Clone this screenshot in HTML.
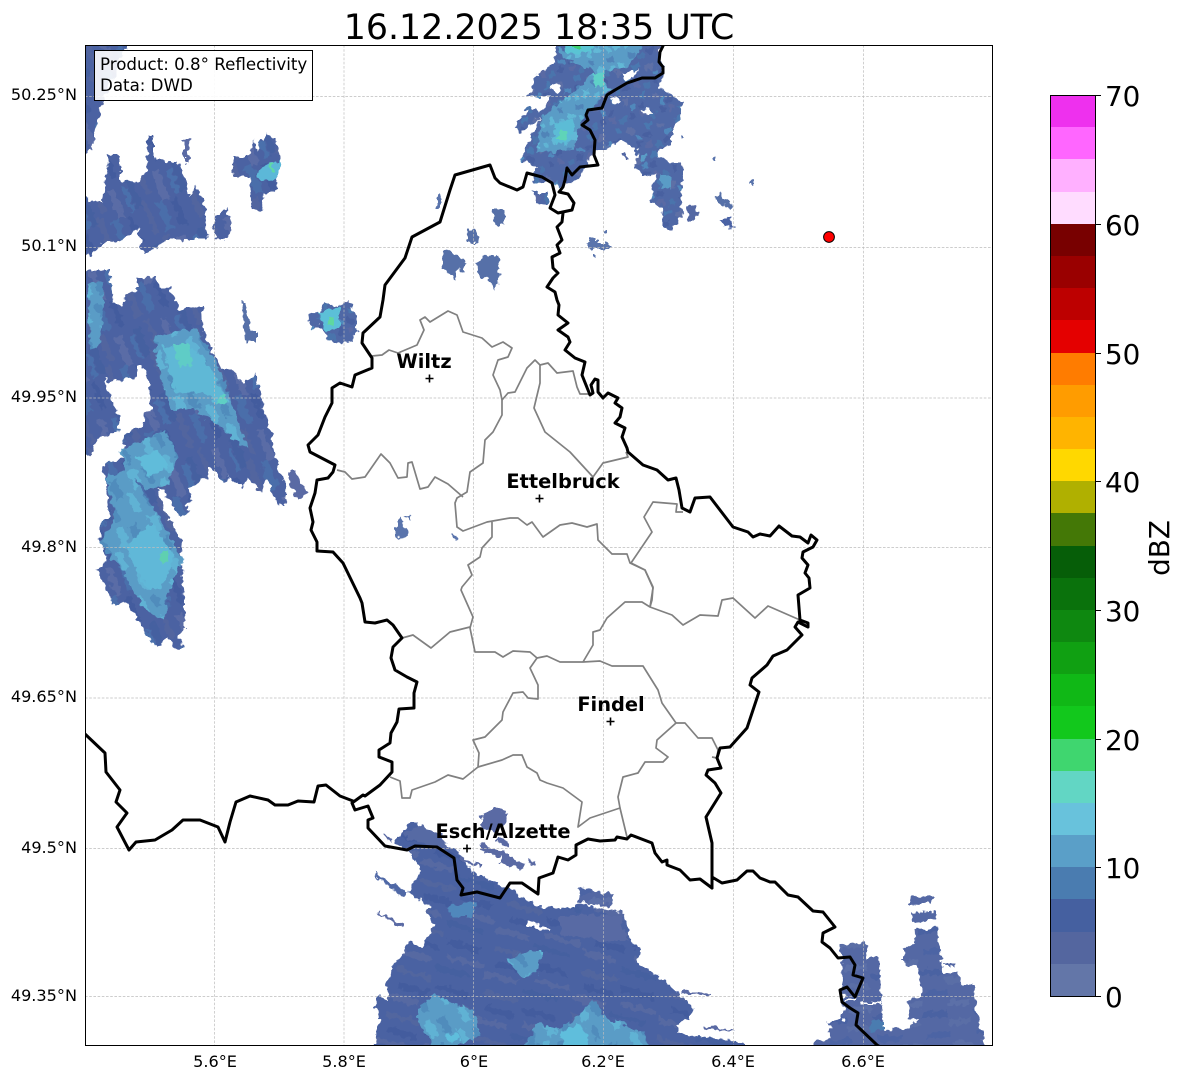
<!DOCTYPE html>
<html><head><meta charset="utf-8"><style>
html,body{margin:0;padding:0;background:#fff;width:1184px;height:1081px;overflow:hidden}
svg{display:block}
text{font-family:"DejaVu Sans",sans-serif;fill:#000}
</style></head><body>
<svg width="1184" height="1081" viewBox="0 0 1184 1081" xmlns="http://www.w3.org/2000/svg">
<defs>
<clipPath id="ax"><rect x="85" y="45" width="907" height="1000"/></clipPath>
<filter id="rough" filterUnits="userSpaceOnUse" x="50" y="20" width="980" height="1060" color-interpolation-filters="sRGB">
<feTurbulence type="fractalNoise" baseFrequency=".16" numOctaves="2" seed="7" result="n"/>
<feDisplacementMap in="SourceGraphic" in2="n" scale="9" xChannelSelector="R" yChannelSelector="G"/>
</filter>
<pattern id="pw" patternUnits="userSpaceOnUse" width="48" height="70" patternTransform="rotate(-22)">
<rect width="48" height="70" fill="#4b62a2"/>
<rect x="0" y="5" width="7" height="30" fill="#4560a0"/><rect x="7" y="30" width="6" height="36" fill="#52659f"/>
<rect x="14" y="0" width="5" height="26" fill="#52659f"/><rect x="20" y="36" width="8" height="30" fill="#4a6eaa"/>
<rect x="28" y="6" width="7" height="32" fill="#5a6ca6"/><rect x="36" y="40" width="6" height="28" fill="#435c9e"/>
<rect x="42" y="10" width="5" height="26" fill="#4a70ac"/></pattern>
<pattern id="pc" patternUnits="userSpaceOnUse" width="36" height="48" patternTransform="rotate(-25)">
<rect width="36" height="48" fill="#5a9cc6"/>
<rect x="2" y="4" width="8" height="18" fill="#508cbc"/><rect x="14" y="22" width="7" height="20" fill="#60b2d4"/>
<rect x="24" y="2" width="8" height="18" fill="#60b2d4"/><rect x="28" y="28" width="6" height="14" fill="#508cbc"/></pattern>
<pattern id="ps" patternUnits="userSpaceOnUse" width="90" height="46" patternTransform="rotate(15)">
<rect width="90" height="46" fill="#4a62a2"/>
<rect x="4" y="3" width="36" height="5" fill="#52669f"/><rect x="46" y="9" width="34" height="6" fill="#435c9e"/>
<rect x="10" y="17" width="30" height="6" fill="#435c9e"/><rect x="50" y="24" width="36" height="5" fill="#5669a2"/>
<rect x="0" y="30" width="34" height="6" fill="#5669a2"/><rect x="40" y="37" width="38" height="5" fill="#4560a0"/></pattern>
<pattern id="pe" patternUnits="userSpaceOnUse" width="50" height="42" patternTransform="rotate(-4)">
<rect width="50" height="42" fill="#5468a4"/>
<rect x="4" y="3" width="22" height="6" fill="#4c64a4"/><rect x="26" y="14" width="22" height="6" fill="#5c70a8"/>
<rect x="0" y="24" width="24" height="6" fill="#4a62a2"/><rect x="24" y="33" width="24" height="6" fill="#5a6ea6"/></pattern>
<pattern id="pn" patternUnits="userSpaceOnUse" width="30" height="30" patternTransform="rotate(-12)">
<rect width="30" height="30" fill="#4f68a6"/>
<rect x="2" y="2" width="6" height="6" fill="#5a6aa4"/><rect x="12" y="5" width="6" height="6" fill="#4a74ac"/>
<rect x="22" y="2" width="6" height="6" fill="#4860a0"/><rect x="5" y="14" width="6" height="6" fill="#4a78b0"/>
<rect x="17" y="17" width="6" height="6" fill="#5e70a6"/><rect x="2" y="24" width="6" height="5" fill="#4860a0"/>
<rect x="24" y="24" width="5" height="5" fill="#5088bc"/></pattern>
<pattern id="pnc" patternUnits="userSpaceOnUse" width="20" height="20" patternTransform="rotate(-12)">
<rect width="20" height="20" fill="#5a9cc6"/>
<rect x="2" y="2" width="6" height="6" fill="#5084b8"/><rect x="11" y="10" width="6" height="6" fill="#62b8d6"/>
<rect x="2" y="13" width="5" height="5" fill="#60b4d4"/></pattern>
</defs>

<rect width="1184" height="1081" fill="#fff"/>

<g clip-path="url(#ax)"><g filter="url(#rough)">
<!-- north-west column -->
<polygon fill="url(#pw)" points="75,35 128,35 122,58 110,85 103,100 97,125 92,150 75,153"/>
<!-- blob A -->
<polygon fill="url(#pw)" points="75,192 97,203 103,203 108,155 120,155 120,180 132,182 138,183 147,170 148,135 153,135 153,158 170,162 178,162 185,173 188,197 197,187 205,208 207,240 165,240 150,253 143,253 138,230 118,242 102,242 92,255 75,253"/>
<polygon fill="url(#pw)" points="213,221 226,209 231,221 231,232 226,240 216,240"/>
<polygon fill="#5a6aa4" points="184,140 190,140 188,162 184,162"/>
<!-- blob B -->
<polygon fill="url(#pw)" points="232,157 248,157 253,140 257,150 268,132 277,143 280,155 278,180 275,192 263,193 262,210 252,208 250,180 242,177 235,177 232,167"/>
<polygon fill="#5cb8d8" points="256,172 266,165 280,160 278,178 262,182"/>
<rect x="270" y="163" width="3" height="9" fill="#5fd8a8"/>
<!-- west complex -->
<polygon fill="url(#pw)" points="75,283 90,270 110,270 113,303 122,305 128,292 137,290 137,278 157,277 158,288 170,288 175,300 180,310 190,308 202,307 203,330 212,350 222,370 233,370 242,383 255,373 262,400 270,430 275,457 287,490 285,507 275,500 267,478 262,493 248,477 243,488 230,478 225,483 213,470 208,468 208,477 190,487 192,500 185,503 190,513 180,517 165,493 157,490 165,510 183,545 180,557 182,573 185,600 185,630 178,637 183,647 177,650 168,638 155,648 142,627 125,600 115,607 97,570 107,560 100,537 101,523 110,517 105,477 103,465 125,457 123,435 143,425 145,413 152,410 148,380 142,365 137,367 137,377 108,382 103,377 95,350 112,403 120,417 118,433 97,438 93,452 87,455 75,455"/>
<polygon fill="url(#pc)" points="88,283 103,282 103,303 100,345 90,350"/>
<polygon fill="url(#pc)" points="155,335 195,328 210,350 225,383 235,413 248,448 234,440 218,425 195,410 172,410 162,383 156,360"/>
<polygon fill="#5fb8d6" points="163,345 198,350 215,377 228,403 218,403 202,393 175,392"/>
<polygon fill="#5fccc6" points="173,345 188,343 192,365 180,368"/>
<rect x="218" y="395" width="8" height="9" fill="#5fcfc4"/>
<polygon fill="url(#pc)" points="120,450 165,430 178,457 168,485 148,490 126,472"/>
<polygon fill="#60bcda" points="137,457 158,450 168,467 148,477"/>
<polygon fill="url(#pc)" points="105,477 128,470 155,510 178,550 182,563 168,590 165,620 145,610 122,570 100,543 116,517"/>
<polygon fill="#60b8d8" points="125,547 152,523 175,557 162,587 148,590"/>
<rect x="160" y="552" width="8" height="10" fill="#5fd0b0"/>
<!-- small patches west -->
<polygon fill="#5a6aa4" points="288,470 293,470 308,493 297,500 292,490"/>
<polygon fill="#5670a8" points="242,302 246,302 250,330 257,332 257,342 245,342"/>
<!-- D -->
<polygon fill="url(#pn)" points="308,315 320,312 322,302 337,307 348,300 357,317 357,332 352,342 337,343 323,333 318,325 310,330"/>
<polygon fill="#5cc0d8" points="318,312 340,308 340,328 325,332"/>
<rect x="328" y="316" width="5" height="9" fill="#5fd8a0"/>
<polygon fill="#5a74ac" points="396,522 401,517 405,526 408,535 403,540 396,534"/>
<polygon fill="#5a74ac" points="406,515 408,514 411,520 409,521"/>
<polygon fill="#5a74ac" points="451,533 453,532 458,539 456,541"/>

<!-- north blob -->
<polygon fill="url(#pn)" points="557,35 657,35 663,73 660,87 682,103 680,120 672,128 672,143 660,150 657,157 670,163 682,163 683,177 680,207 683,212 672,230 663,227 662,207 650,200 657,173 643,177 635,167 638,150 633,147 620,140 613,143 607,150 597,150 590,157 580,177 563,187 543,183 532,180 537,167 520,160 528,143 540,117 522,132 512,128 530,107 540,112 550,97 528,97 537,75 555,62"/>
<polygon fill="url(#pnc)" points="540,120 597,70 610,90 583,117 573,150 537,153"/>
<polygon fill="url(#pnc)" points="557,50 647,40 627,67 600,73 567,60"/>
<polygon fill="#5cbcd6" points="553,123 575,120 572,140 556,145"/>
<polygon fill="#5fd4b8" points="558,130 567,130 566,140 558,140"/>
<polygon fill="#5fd0c8" points="593,73 603,72 604,86 595,87"/>
<polygon fill="#5ac4d4" points="563,38 600,38 590,53 567,53"/>
<rect x="572" y="38" width="10" height="10" fill="#3cd070"/>
<polygon fill="#fff" points="622,75 632,70 638,70 634,76 625,80"/>
<polygon fill="#fff" points="611,100 619,96 620,100 615,105 610,104"/>
<polygon fill="#fff" points="642,111 650,107 654,112 649,115 644,115"/>
<polygon fill="#fff" points="550,87 558,85 561,91 554,93"/>
<polygon fill="#5a9cc6" points="640,155 647,155 645,162 640,161"/>
<polygon fill="#5a9cc6" points="660,175 672,175 672,188 662,188"/>
<polygon fill="url(#pn)" points="533,193 548,193 548,203 537,204"/>
<polygon fill="#5468a4" points="687,207 695,205 700,213 695,220 688,220"/>
<polygon fill="#5670a8" points="713,197 720,195 732,206 730,209 718,202"/>
<polygon fill="#4a62a4" points="720,220 730,217 735,228 732,230 724,225"/>
<polygon fill="#5a74ac" points="603,145 610,146 608,150 604,150"/>
<polygon fill="#5468a4" points="623,152 627,152 626,158 624,158"/>
<rect x="587" y="243" width="23" height="6" fill="#5a74ac"/><rect x="590" y="238" width="5" height="5" fill="#5a74ac"/>
<rect x="603" y="230" width="4" height="4" fill="#5a74ac"/><rect x="593" y="254" width="3" height="3" fill="#5a74ac"/>
<rect x="682" y="135" width="3" height="4" fill="#5a74ac"/><rect x="713" y="157" width="3" height="3" fill="#5a74ac"/>
<rect x="751" y="180" width="3" height="4" fill="#5a74ac"/>
<!-- N Lux patches -->
<rect x="437" y="195" width="3" height="13" fill="#5a74ac"/>
<polygon fill="#5670a8" points="467,230 476,228 478,243 468,243"/>
<polygon fill="#5670a8" points="492,208 503,208 505,225 495,225"/>
<polygon fill="#5670a8" points="442,252 452,250 465,262 465,272 458,268 455,280 448,272 443,270"/>
<polygon fill="#5670a8" points="477,262 488,255 498,255 500,275 495,290 489,280 478,276"/>

<!-- south blob -->
<polygon fill="url(#ps)" points="372,1060 380,1017 375,1007 378,993 388,1003 387,980 395,963 400,957 410,940 422,948 435,923 425,913 432,907 407,893 422,870 413,857 395,843 410,820 457,850 470,870 510,890 523,897 537,907 573,908 580,903 623,913 630,940 640,950 637,963 660,977 682,997 693,1007 690,1020 677,1023 677,1033 745,1043 745,1060"/>
<polygon fill="#566aa4" points="422,825 440,835 445,842 455,850 430,845 410,838 400,835"/>
<polygon fill="#586aa4" points="560,915 620,915 628,940 600,940 560,935"/>
<polygon fill="url(#pc)" points="418,1008 435,995 475,1012 480,1035 440,1055 418,1022"/>
<polygon fill="url(#pc)" points="520,1055 537,1022 557,1030 577,1017 593,1000 606,1017 645,1033 650,1055"/>
<polygon fill="url(#pc)" points="507,960 530,950 543,950 537,973 523,977"/>
<polygon fill="#5088bc" points="445,907 477,902 470,917 453,917"/>
<polygon fill="#5fbedc" points="560,1032 578,1025 587,1032 590,1052 565,1052"/>
<polygon fill="#5fbedc" points="445,1035 456,1032 460,1040 450,1042"/>
<polygon fill="#fff" points="527,922 540,925 551,929 551,931 538,928 527,925"/>
<polygon fill="url(#pe)" points="580,887 615,895 610,907 578,902"/>
<polygon fill="#5a6aa4" points="480,818 492,808 510,813 503,825 493,832 480,825"/>
<polygon fill="#5a6aa4" points="480,843 505,853 525,865 522,870 500,863 503,858 480,850"/>
<polygon fill="#5a6aa4" points="528,860 538,864 537,866 527,862"/>
<polygon fill="#5a6aa4" points="497,837 508,843 506,846 495,841"/>
<polygon fill="#4f68a6" points="373,872 407,892 403,897 383,882"/>
<polygon fill="#5a6aa4" points="378,912 403,923 402,928 380,915"/>
<polygon fill="#5a6aa4" points="383,833 393,840 391,843 382,836"/>
<polygon fill="#5a6aa4" points="460,856 482,866 480,868 458,859"/>
<polygon fill="#5a6aa4" points="683,990 710,994 710,996 683,994"/>
<polygon fill="#5a6aa4" points="705,1026 733,1029 733,1031 705,1029"/>

<!-- south-east -->
<polygon fill="url(#pe)" points="841,945 866,942 867,960 878,960 880,977 882,1013 884,1030 910,1028 912,1023 920,1020 909,1018 908,998 922,997 918,967 903,963 903,950 915,943 913,930 938,928 940,947 943,973 958,972 962,987 973,983 977,1013 982,1030 985,1060 802,1060 815,1042 830,1038 829,1022 843,1020 843,1013 842,957"/>
<polygon fill="#4a7cb0" points="870,1022 884,1020 884,1030 872,1032"/>
<rect x="844" y="998" width="12" height="2" fill="#fff"/>
<rect x="859" y="1002" width="22" height="2" fill="#fff"/>
<polygon fill="#5468a4" points="909,897 933,895 933,903 911,905"/>
<polygon fill="#5468a4" points="911,913 936,911 936,918 914,922"/>
<rect x="944" y="964" width="12" height="3" fill="#5468a4"/>
<rect x="960" y="985" width="15" height="3" fill="#5468a4"/>
<rect x="866" y="958" width="12" height="3" fill="#5468a4"/>
</g></g>

<!-- grid -->
<g stroke="#bdbdbd" stroke-width=".7" stroke-dasharray="2.6 1.6" fill="none">
<path d="M214.5 45V1045M344 45V1045M473.5 45V1045M603.5 45V1045M733.5 45V1045M863.5 45V1045"/>
<path d="M85 96.5H992M85 247.5H992M85 398H992M85 547.5H992M85 698H992M85 848.5H992M85 996.5H992"/>
</g>

<!-- admin borders -->
<g fill="none" stroke="#808080" stroke-width="1.7" stroke-linejoin="round" clip-path="url(#ax)">
<polyline points="372,356 382,355 389,350 398,353 417,345 424,330 420,320 425,317 430,322 448,311 457,315 463,332 482,338 492,347 503,342 512,348 508,357 498,360 493,375 500,390 502,400 502,415 493,432 485,440 483,463 470,472 467,492 457,498 455,503 457,527 463,531 487,522 510,518 518,518 527,525 532,522 543,537 560,525 572,523 587,527 597,524 598,540 612,554 627,554 630,563 645,570 653,587 652,600 650,607"/>
<polyline points="502,400 508,393 515,392 527,368 535,360 540,365 548,363 557,373 573,371 577,387 580,394 590,394"/>
<polyline points="540,365 540,383 534,408 545,432 570,452 593,477 603,463 628,457 626,452"/>
<polyline points="337,470 345,472 352,479 365,477 381,454 390,463 398,478 407,477 408,463 412,462 420,489 428,487 435,477 448,484 463,497"/>
<polyline points="492,522 492,537 482,548 480,557 468,565 472,575 462,587 461,590 473,617 470,628 475,652 495,652 503,657 513,651 530,652 537,658 530,668 538,685 538,699 528,698 523,692 513,693 503,712 502,720 485,737 473,740 479,753 478,767 463,779 448,775 435,782 412,790 410,798 402,798 400,781 390,777"/>
<polyline points="402,638 413,635 431,648 450,632 470,627"/>
<polyline points="478,767 502,760 513,755 522,755 527,767 537,773 540,780 547,783 563,788 582,802 578,827 590,818 620,808 627,837"/>
<polyline points="620,808 618,797 623,777 638,773 645,762 663,762 668,757 656,748 657,740 676,723 685,723 698,738 712,738 718,750 717,758 712,757"/>
<polyline points="537,658 547,656 560,662 583,662 600,661 612,666 643,666 658,690 662,703 676,723"/>
<polyline points="583,662 593,645 593,632 600,630 607,618 625,602 642,602 650,607 672,615 683,625 700,615 718,616 722,600 733,598 755,618 768,606 800,620"/>
<polyline points="650,607 653,588 645,570 631,563 652,532 644,517 653,502 677,504 676,512 683,512"/>
</g>

<!-- national borders -->
<g fill="none" stroke="#000" stroke-width="3" stroke-linejoin="round" stroke-linecap="round" clip-path="url(#ax)">
<polyline points="85,734 105,753 106,772 120,790 116,802 127,813 117,827 129,850 136,842 155,840 172,830 183,820 200,820 218,827 225,842 230,822 236,802 250,796 268,800 275,805 288,805 298,801 314,802 318,786 326,785 340,796 353,801"/>
<polyline points="663,46 660,52 659,62 663,67 663,73 655,78 642,78 627,83 615,90 607,95 602,108 588,110 586,115 588,120 582,125 590,130 595,140 594,155 598,165 580,167 572,175 567,168 565,180 563,187 559,192 568,194 574,203 572,210 558,213 550,208 555,195 552,183 542,177 527,173 523,187 517,190 500,183 495,178 490,165 455,175 450,190 440,222 412,237 405,258 385,285 383,300 380,317 363,333 362,343 372,358 372,368 355,375 352,387 340,383 332,388 332,403 325,417 318,435 308,445 310,452 335,465 333,472 328,478 317,480 315,493 310,508 313,522 311,530 317,542 317,551 333,552 343,563 360,598 362,603 365,622 375,623 387,620 393,625 402,638 393,647 391,658 395,670 407,677 417,682 414,693 414,708 399,709 397,722 391,733 390,743 379,750 379,757 392,762 392,772 380,785 365,796 363,795 352,803 355,810 368,806 373,818 368,820 368,828 385,846 407,850 415,846 437,847 454,858 457,880 463,888 461,895 477,892 500,898 510,883 522,883 538,894 539,878 553,873 558,857 568,860 576,855 576,845 588,839 600,841 615,840 617,837 627,839 631,835 652,843 655,853 662,862 667,860 667,865 680,870 690,880 700,879 712,888 712,877 722,883 737,880 747,871 753,871 760,878 770,882 775,882 788,895 798,897 813,911 823,912 835,927 823,933 822,942 830,948 838,958 850,957 855,965 853,975 863,978 855,997 847,987 840,990 842,1002 850,1008 858,1013 856,1025 877,1045 882,1048"/>
<polyline points="563,213 562,222 557,227 562,240 557,245 560,253 552,257 553,268 558,273 553,278 547,287 555,292 557,300 559,305 558,315 568,323 558,330 568,337 570,342 565,350 575,358 585,362 582,375 590,395 593,393 591,385 595,379 598,380 598,392 603,398 608,393 618,398 615,403 622,408 620,417 615,423 625,428 622,437 627,448 628,452 643,465 657,470 668,480 676,478 679,490 682,508 690,512 695,498 710,497 733,527 748,532 753,537 760,534 770,536 779,526 792,536 800,537 808,543 811,535 817,540 813,547 803,552 802,558 808,565 805,573 809,578 810,588 798,595 800,620 808,623 808,627 798,622 795,627 802,635 787,650 773,656 767,665 752,678 750,685 759,692 747,728 730,747 720,748 717,758 721,768 708,770 706,775 715,783 721,793 706,817 712,843 712,867 712,888"/>
</g>

<!-- axes frame -->
<rect x="85.5" y="45.5" width="907" height="1000" fill="none" stroke="#000" stroke-width="1"/>

<!-- city markers & labels -->
<g stroke="#000" stroke-width="1.6" fill="none">
<path d="M425.5 378.5h8M429.5 374.5v8M535.5 498.5h8M539.5 494.5v8M606.5 721.5h8M610.5 717.5v8M463 848.5h8M467 844.5v8"/>
</g>
<g font-weight="700" font-size="19.4" text-anchor="middle">
<text x="424" y="368">Wiltz</text>
<text x="563" y="488">Ettelbruck</text>
<text x="611" y="711">Findel</text>
<text x="503" y="838">Esch/Alzette</text>
</g>

<circle cx="829" cy="237" r="5.4" fill="#f00" stroke="#000" stroke-width="1"/>

<!-- info box -->
<rect x="94.5" y="50.5" width="218" height="50" fill="#fff" fill-opacity=".9" stroke="#000" stroke-width="1"/>
<text x="100" y="70" font-size="16.67">Product: 0.8° Reflectivity</text>
<text x="100" y="91" font-size="16.67">Data: DWD</text>

<!-- tick labels -->
<g font-size="16.1" text-anchor="end">
<text x="77" y="100">50.25°N</text>
<text x="77" y="251">50.1°N</text>
<text x="77" y="402">49.95°N</text>
<text x="77" y="552">49.8°N</text>
<text x="77" y="702">49.65°N</text>
<text x="77" y="853">49.5°N</text>
<text x="77" y="1001">49.35°N</text>
</g>
<g font-size="16.1" text-anchor="middle">
<text x="215" y="1067">5.6°E</text>
<text x="344" y="1067">5.8°E</text>
<text x="474" y="1067">6°E</text>
<text x="603" y="1067">6.2°E</text>
<text x="733" y="1067">6.4°E</text>
<text x="863" y="1067">6.6°E</text>
</g>

<text x="539" y="39" font-size="34.8" text-anchor="middle">16.12.2025 18:35 UTC</text>

<!-- colorbar -->
<g shape-rendering="crispEdges">
<rect x="1051" y="95" width="44" height="32" fill="#ee30ee"/>
<rect x="1051" y="127" width="44" height="32" fill="#ff66ff"/>
<rect x="1051" y="159" width="44" height="33" fill="#ffb0ff"/>
<rect x="1051" y="192" width="44" height="32" fill="#ffdcff"/>
<rect x="1051" y="224" width="44" height="32" fill="#780000"/>
<rect x="1051" y="256" width="44" height="32" fill="#9a0000"/>
<rect x="1051" y="288" width="44" height="32" fill="#bd0000"/>
<rect x="1051" y="320" width="44" height="33" fill="#e40000"/>
<rect x="1051" y="353" width="44" height="32" fill="#ff7c00"/>
<rect x="1051" y="385" width="44" height="32" fill="#ff9c00"/>
<rect x="1051" y="417" width="44" height="32" fill="#ffb400"/>
<rect x="1051" y="449" width="44" height="32" fill="#ffd800"/>
<rect x="1051" y="481" width="44" height="32" fill="#b0b000"/>
<rect x="1051" y="513" width="44" height="33" fill="#447806"/>
<rect x="1051" y="546" width="44" height="32" fill="#065e08"/>
<rect x="1051" y="578" width="44" height="32" fill="#0a720c"/>
<rect x="1051" y="610" width="44" height="32" fill="#0e8810"/>
<rect x="1051" y="642" width="44" height="32" fill="#10a012"/>
<rect x="1051" y="674" width="44" height="32" fill="#10b816"/>
<rect x="1051" y="706" width="44" height="33" fill="#12c81c"/>
<rect x="1051" y="739" width="44" height="32" fill="#3fd66f"/>
<rect x="1051" y="771" width="44" height="32" fill="#62d6c4"/>
<rect x="1051" y="803" width="44" height="32" fill="#68c2dc"/>
<rect x="1051" y="835" width="44" height="32" fill="#5a9fc8"/>
<rect x="1051" y="867" width="44" height="32" fill="#4a7cb0"/>
<rect x="1051" y="899" width="44" height="33" fill="#4560a0"/>
<rect x="1051" y="932" width="44" height="32" fill="#54669f"/>
<rect x="1051" y="964" width="44" height="32" fill="#6376a8"/>
</g>
<rect x="1050.5" y="95.5" width="45" height="901" fill="none" stroke="#000" stroke-width="1"/>
<path d="M1095 95.5h6M1095 224.5h6M1095 353.5h6M1095 481.5h6M1095 610.5h6M1095 739.5h6M1095 867.5h6M1095 996.5h6" stroke="#000" stroke-width="1" fill="none"/>
<g font-size="27.8">
<text x="1105" y="106">70</text>
<text x="1105" y="235">60</text>
<text x="1105" y="364">50</text>
<text x="1105" y="492">40</text>
<text x="1105" y="621">30</text>
<text x="1105" y="750">20</text>
<text x="1105" y="878">10</text>
<text x="1105" y="1007">0</text>
</g>
<text transform="translate(1169,548) rotate(-90)" font-size="27.8" text-anchor="middle">dBZ</text>
</svg>
</body></html>
